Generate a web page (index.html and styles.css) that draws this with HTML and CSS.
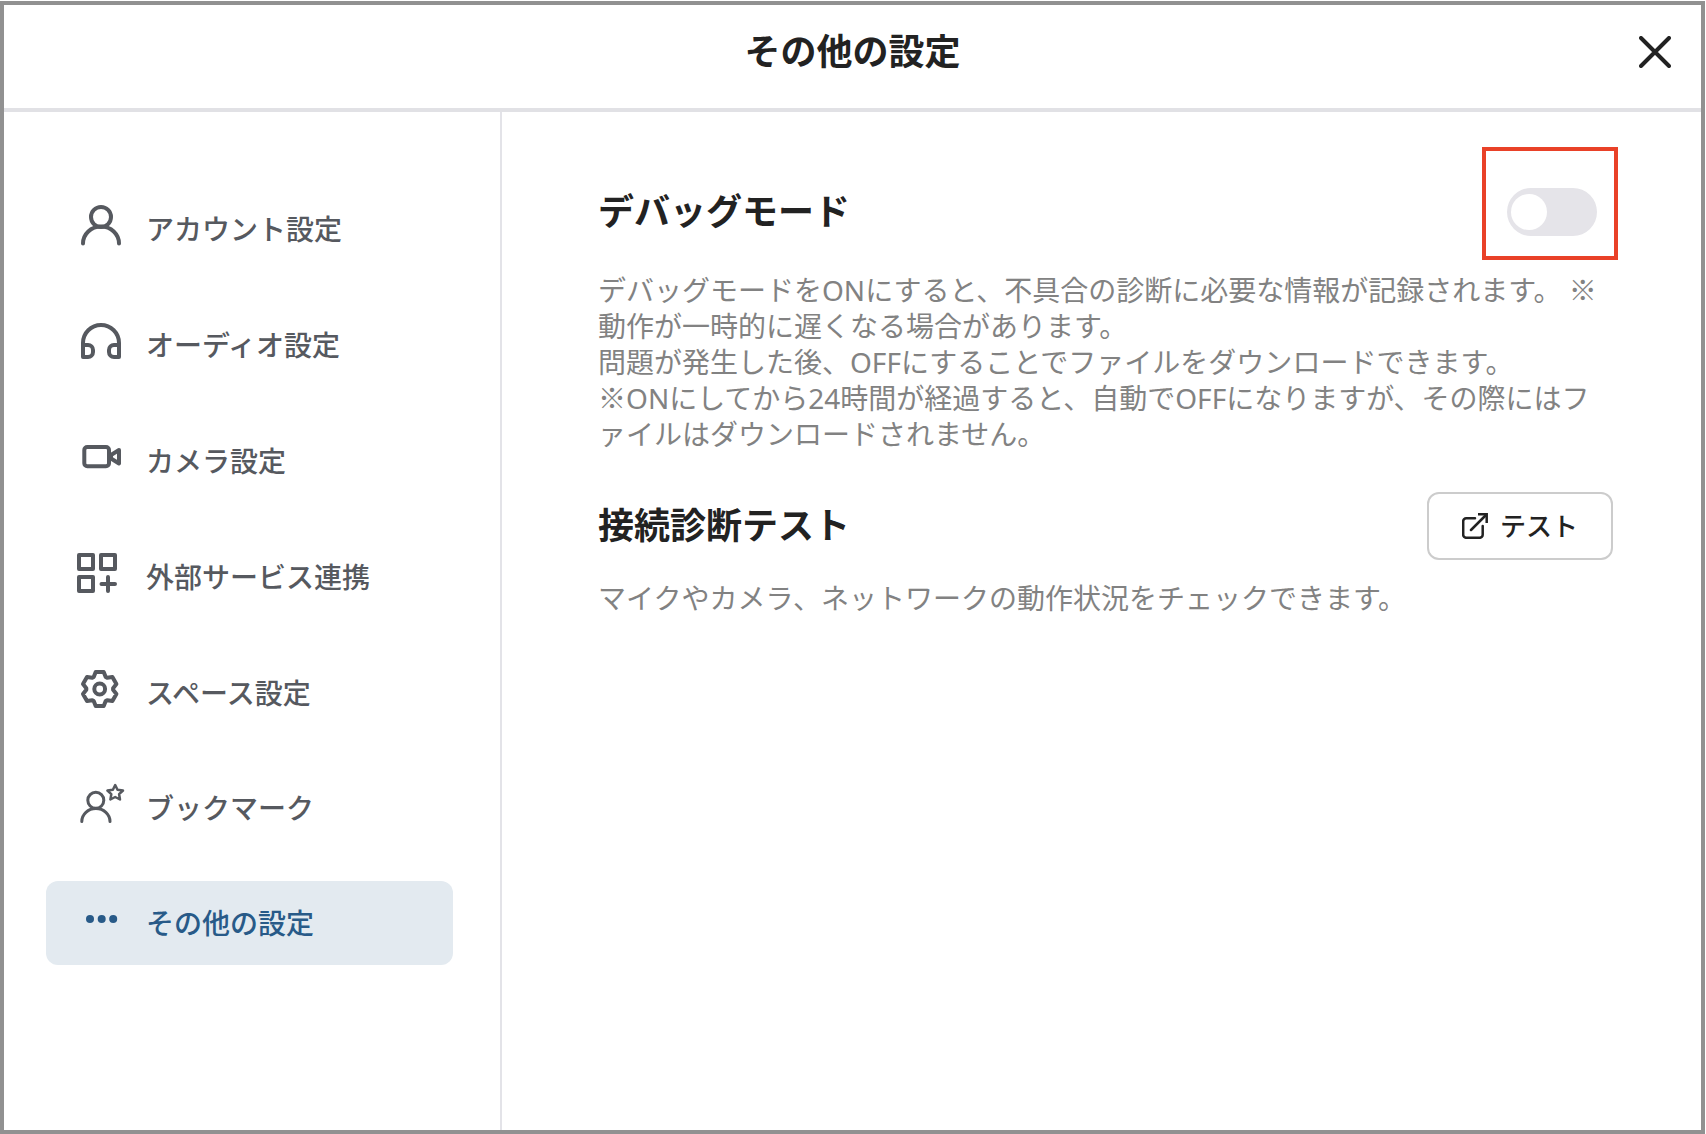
FILE: index.html
```html
<!DOCTYPE html>
<html lang="ja">
<head>
<meta charset="utf-8">
<meta name="viewport" content="width=device-width, initial-scale=1">
<title>その他の設定</title>
<link rel="stylesheet" href="styles.css">
</head>
<body>
<div class="dialog" role="dialog" aria-labelledby="dialog-title">
  <header class="dialog-header">
    <h1 class="dialog-title" id="dialog-title">その他の設定</h1>
    <button class="close" type="button" aria-label="閉じる">
      <svg width="32" height="32" viewBox="0 0 32 32" fill="none" stroke="currentColor" stroke-width="4" stroke-linecap="round"><path d="M2 2 30 30M30 2 2 30"/></svg>
    </button>
  </header>
  <div class="dialog-body">
    <nav class="menu">
      <a class="menu-item" href="#account">
        <svg class="menu-icon" width="56" height="52" viewBox="0 0 56 52"><circle cx="27" cy="14" r="10"/><path d="M9 40.500A18 17 0 0 1 45 40.500"/></svg>
        <span>アカウント設定</span>
      </a>
      <a class="menu-item" href="#audio">
        <svg class="menu-icon" width="56" height="52" viewBox="0 0 56 52"><path d="M9 38V24a18 18 0 0 1 36 0v14h-5a5 5 0 0 1-5-5v-2a5 5 0 0 1 5-5h5M9 26h5a5 5 0 0 1 5 5v2a5 5 0 0 1-5 5H9"/></svg>
        <span>オーディオ設定</span>
      </a>
      <a class="menu-item" href="#camera">
        <svg class="menu-icon" width="56" height="52" viewBox="0 0 56 52"><rect x="10.300" y="12" width="24.700" height="19.300" rx="3"/><path d="M45 15 37 20v3.500l8 5z"/></svg>
        <span>カメラ設定</span>
      </a>
      <a class="menu-item" href="#services">
        <svg class="menu-icon" width="56" height="52" viewBox="0 0 56 52"><path d="M5 4h14v14H5zM27 4h14v14H27zM5 26h14v14H5zM34 26v14M27.500 33h13.500"/></svg>
        <span>外部サービス連携</span>
      </a>
      <a class="menu-item" href="#space">
        <svg class="menu-icon" width="56" height="52" viewBox="0 0 56 52"><g transform="translate(25.700 22)"><path d="M-4-17H4L6-12 7.400-11.200 12.700-12 16.700-5 13.400-.8V.8L16.700 5 12.700 12 7.400 11.200 6 12 4 17H-4L-6 12-7.400 11.200-12.700 12-16.700 5-13.400.8V-.8L-16.700-5-12.700-12-7.400-11.200-6-12z"/><circle r="5.400"/></g></svg>
        <span>スペース設定</span>
      </a>
      <a class="menu-item" href="#bookmark">
        <svg class="menu-icon" width="56" height="50" viewBox="0 0 56 50"><g stroke-width="3"><circle cx="21.800" cy="17.300" r="8"/><path d="M7.800 38.500A14.100 13 0 0 1 36 38.500"/></g><path stroke-width="2.500" d="M41.200 2 43.500 6.700 49 7.500 45.100 11.200 46 16.500 41.200 14 36.400 16.500 37.300 11.200 33.400 7.500 38.900 6.700z"/></svg>
        <span>ブックマーク</span>
      </a>
      <a class="menu-item menu-item-active" href="#other" aria-current="page">
        <svg class="menu-icon menu-icon-dots" width="56" height="52" viewBox="0 0 56 52"><circle cx="16" cy="22" r="4"/><circle cx="27.700" cy="22" r="4"/><circle cx="39.200" cy="22" r="4"/></svg>
        <span>その他の設定</span>
      </a>
    </nav>
    <main class="content">
      <section class="setting setting-debug">
        <div class="setting-head">
          <h2 class="setting-title" id="debug-title">デバッグモード</h2>
          <div class="toggle-wrap">
            <input class="toggle" type="checkbox" role="switch" aria-labelledby="debug-title">
            <span class="highlight"></span>
          </div>
        </div>
        <p class="setting-text">デバッグモードをONにすると、不具合の診断に必要な情報が記録されます。 <span class="note-mark">※</span>動作が一時的に遅くなる場合があります。<br>問題が発生した後、OFFにすることでファイルをダウンロードできます。<br><span class="note-mark">※</span>ONにしてから24時間が経過すると、自動でOFFになりますが、その際にはファイルはダウンロードされません。</p>
      </section>
      <section class="setting">
        <div class="setting-head">
          <h2 class="setting-title">接続診断テスト</h2>
          <button class="test-button" type="button">
            <svg width="26" height="26" viewBox="0 0 26 26" fill="none" stroke="currentColor" stroke-width="2.500"><path stroke-linecap="round" d="M13 5.300H4.200a3 3 0 0 0-3 3v13.500a3 3 0 0 0 3 3h13.500a3 3 0 0 0 3-3V13M9 17 24 2"/><path d="M16 1.300h8.700V10"/></svg>
            テスト
          </button>
        </div>
        <p class="setting-text">マイクやカメラ、ネットワークの動作状況をチェックできます。</p>
      </section>
    </main>
  </div>
</div>
</body>
</html>
```
FILE: styles.css
```css
*,
*::before,
*::after {
  box-sizing: border-box;
}

body {
  display: flex;
  min-height: 100vh;
  margin: 0;
  padding: 1px 1px 0 0;
  background: #fff;
  color: #222;
  font-family: "Noto Sans", "Noto Sans CJK JP", sans-serif;
  font-size: 28px;
  line-height: 36px;
}

h1,
h2,
p {
  margin: 0;
}

.dialog {
  display: flex;
  flex: 1;
  flex-direction: column;
  border: 4px solid #919191;
}

.dialog-header {
  display: grid;
  grid-template-columns: 1fr auto 1fr;
  align-items: center;
  padding: 21px 30px 30px;
  border-bottom: 4px solid #e1e1e5;
}

.dialog-title {
  grid-column: 2;
  font-size: 36px;
  font-weight: 700;
  line-height: 52px;
}

.close {
  display: flex;
  justify-self: end;
  padding: 0;
  border: 0;
  background: none;
  color: #222;
}

.dialog-body {
  display: flex;
  flex: 1;
}

.menu {
  display: flex;
  flex: 0 0 498px;
  flex-direction: column;
  gap: 32px;
  padding: 75px 47px 75px 42px;
  border-right: 2px solid #e3e3e8;
}

.menu-item {
  display: flex;
  align-items: center;
  gap: 16px;
  padding: 16px 28px;
  border-radius: 12px;
  color: #56595f;
  font-weight: 500;
  text-decoration: none;
}

.menu-item-active {
  background: #e3eaf0;
  color: #285a88;
}

.menu-icon {
  flex: none;
  fill: none;
  stroke: currentColor;
  stroke-width: 4;
  stroke-linecap: round;
  stroke-linejoin: round;
}

.menu-icon-dots {
  fill: currentColor;
  stroke: none;
}

.content {
  display: flex;
  flex: 1;
  flex-direction: column;
  gap: 40px;
  padding: 76px 88px 76px 96px;
}

.setting {
  display: flex;
  flex-direction: column;
  gap: 20px;
}

.setting-debug {
  gap: 36px;
}

.setting-head {
  display: flex;
  align-items: center;
  justify-content: space-between;
}

.setting-title {
  font-size: 36px;
  font-weight: 700;
  line-height: 48px;
}

.setting-text {
  color: #828282;
}

/* Takes the reference mark from the Japanese font, at full width */
.note-mark {
  font-family: "Open Sans", "Noto Sans CJK JP", sans-serif;
}

.toggle-wrap {
  position: relative;
  display: flex;
  margin-right: 16px;
}

.toggle {
  display: flex;
  align-items: center;
  width: 90px;
  height: 48px;
  margin: 0;
  padding: 0 4px;
  border-radius: 24px;
  background: #e5e4e9;
  appearance: none;
}

.toggle::before {
  width: 36px;
  height: 36px;
  border-radius: 50%;
  background: #fff;
  content: "";
}

.toggle:checked {
  justify-content: flex-end;
  background: #285a88;
}

/* Frame that draws attention to the switch */
.highlight {
  position: absolute;
  inset: -41px -21px -24px -25px;
  border: 4px solid #e94128;
  pointer-events: none;
}

.test-button {
  display: flex;
  align-items: center;
  gap: 12px;
  padding: 14px 33px;
  border: 2px solid #ccc;
  border-radius: 12px;
  background: #fff;
  color: #222;
  font-family: inherit;
  font-size: 26px;
  font-weight: 500;
  line-height: 36px;
}
```
